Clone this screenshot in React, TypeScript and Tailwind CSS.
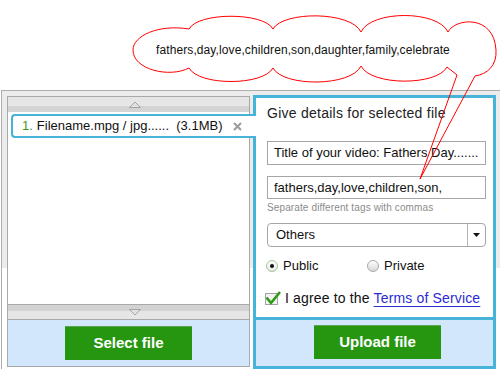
import React from 'react'

function ScrollArrow({ down }: { down?: boolean }) {
  return (
    <svg width="12" height="7" viewBox="0 0 12 7">
      <polygon points={down ? '0.5,0.5 11.5,0.5 6,6' : '0.5,6.5 11.5,6.5 6,1'} fill="#e2e2e2" stroke="#a3a3a3" strokeWidth="1" />
    </svg>
  )
}

function Radio({ checked }: { checked?: boolean }) {
  return checked ? (
    <span className="flex h-[12px] w-[12px] shrink-0 items-center justify-center rounded-full border border-[#9fc892] bg-[linear-gradient(#ffffff,#e9e9e9)]">
      <span className="h-[4px] w-[4px] rounded-full bg-[#111]" />
    </span>
  ) : (
    <span className="h-[12px] w-[12px] shrink-0 rounded-full border border-[#a9a9a9] bg-[linear-gradient(#ffffff,#d8d8d8)]" />
  )
}

function FileList() {
  return (
    <div className="mt-px flex h-[271px] w-[243px] shrink-0 flex-col border border-[#a9a9a9] bg-white">
      <div className="flex h-[15px] items-center bg-[linear-gradient(to_bottom,#e6e6e6_9px,#d4d4d4_9px)] pl-[121px]">
        <ScrollArrow />
      </div>
      <div className="h-[192px] px-[3px] pt-[2px]">
        <div className="relative z-10 flex h-[24px] w-[245px] items-center rounded-l-[4px] border-y-2 border-l-2 border-[#48b3d9] bg-white pl-[9px] text-[13px]">
          <span className="text-[#3a9a18]">1.</span>
          <span className="ml-[4px]">Filename.mpg / jpg......&nbsp; (3.1MB)</span>
          <svg className="ml-auto mr-[14px]" width="9" height="9" viewBox="0 0 9 9">
            <path d="M1 1 L8 8 M8 1 L1 8" stroke="#9c9c9c" strokeWidth="2" />
          </svg>
        </div>
      </div>
      <div className="flex h-[16px] items-start border-y border-[#a9a9a9] bg-[linear-gradient(to_bottom,#d3d3d3_6px,#e6e6e6_6px)] pl-[121px] pt-[4px]">
        <ScrollArrow down />
      </div>
      <div className="flex flex-1 justify-center bg-[#d2e6fc] pt-[6px]">
        <button className="h-[34px] w-[127px] border-t border-[#5fa24f] bg-[#269611] text-[15px] font-bold text-white">Select file</button>
      </div>
    </div>
  )
}

function Details() {
  return (
    <div className="ml-[3px] flex h-[274px] w-[243px] shrink-0 flex-col border-[3px] border-[#48b3d9] bg-white">
      <div className="h-[219px] pl-[11px] pr-[7px] pt-[7px]">
        <h2 className="text-[14px] leading-[16px] tracking-[0.25px] text-[#222]">Give details for selected file</h2>
        <div className="mt-[20px] flex h-[24px] items-center border border-[#a6a6a6] pl-[6px] text-[13px]">Title of your video: Fathers Day.......</div>
        <div className="mt-[11px] flex h-[23px] items-center border border-[#a6a6a6] pl-[6px] text-[13px]">fathers,day,love,children,son,</div>
        <p className="mt-[3px] text-[10px] leading-[12px] tracking-[0.12px] text-[#8c8c8c]">Separate different tags with commas</p>
        <div className="mt-[9px] flex h-[24px] items-stretch rounded-[4px] border border-[#a6a6a6] text-[13px]">
          <span className="flex flex-1 items-center pl-[8px]">Others</span>
          <span className="flex w-[18px] items-center justify-center border-l border-[#b5b5b5]">
            <svg width="7" height="4" viewBox="0 0 7 4"><polygon points="0,0 7,0 3.5,4" fill="#111" /></svg>
          </span>
        </div>
        <div className="-ml-px mt-[11px] flex h-[16px] items-center text-[13px]">
          <div className="flex w-[101px] items-center">
            <Radio checked />
            <span className="ml-[5px]">Public</span>
          </div>
          <Radio />
          <span className="ml-[5px]">Private</span>
        </div>
        <div className="-ml-[2px] mt-[16px] flex h-[16px] items-center text-[14px] tracking-[0.15px]">
          <svg className="shrink-0 overflow-visible" width="18" height="16" viewBox="0 0 18 16">
            <rect x="0.5" y="3.5" width="12" height="11" fill="#f2f2f2" stroke="#a3a3a3" />
            <polyline points="1.5,7.5 6,13 15,2" fill="none" stroke="#2c9c18" strokeWidth="2.6" />
          </svg>
          <span className="ml-[2px]">I agree to the</span>
          <span className="ml-[4px] text-[#2b2bd4] underline decoration-[#2b2bd4] underline-offset-[3px]">Terms of Service</span>
        </div>
      </div>
      <div className="flex flex-1 justify-center border-t-[3px] border-[#48b3d9] bg-[#d2e6fc] pl-[6px] pt-[5px]">
        <button className="h-[34px] w-[127px] border-t border-[#5fa24f] bg-[#269611] text-[15px] font-bold text-white">Upload file</button>
      </div>
    </div>
  )
}

function Callout() {
  const d =
    'M133 50 C133 36 158 24 189 29 C198 12 264 12 273 29 C283 11 351 11 361 32 C371 10 438 10 448 32 ' +
    'C455 18 494 14 496 50 C497 65 488 74 475 76 L420 179 L457 75 L447 67 ' +
    'C437 86 371 86 361 66 C351 87 283 87 273 68 C263 86 199 86 189 68 C170 78 133 70 133 50 Z'
  return (
    <svg className="pointer-events-none absolute left-0 top-0 z-20" width="500" height="369" viewBox="0 0 500 369">
      <path d={d} fill="none" stroke="#ff0000" strokeWidth="1" />
      <text x="156" y="54" fontFamily="Liberation Sans, Arial, sans-serif" fontSize="12" letterSpacing="0.1" fill="#111">
        fathers,day,love,children,son,daughter,family,celebrate
      </text>
    </svg>
  )
}

export default function App() {
  return (
    <div className="relative h-[369px] w-[500px] overflow-hidden bg-white font-['Liberation_Sans',Arial,sans-serif] text-[#111]">
      <div className="ml-px mt-[90px] flex h-[279px] items-start border-l border-t border-[#adadad] bg-[linear-gradient(to_bottom,#ececec_177px,#ffffff_177px)] pl-[5px] pt-[4px]">
        <FileList />
        <Details />
      </div>
      <Callout />
    </div>
  )
}
